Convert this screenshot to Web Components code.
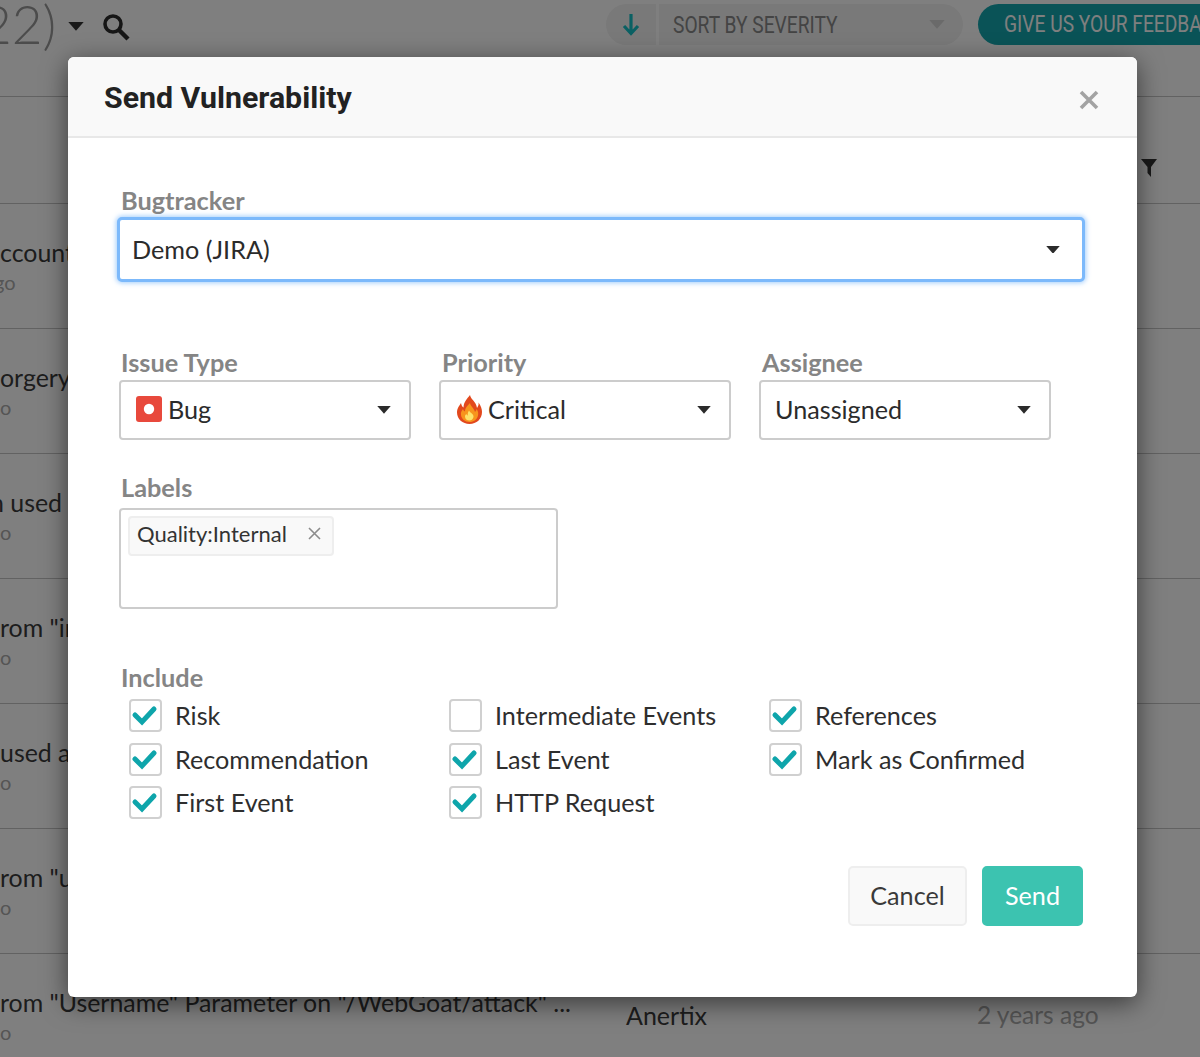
<!DOCTYPE html>
<html>
<head>
<meta charset="utf-8">
<title>Send Vulnerability</title>
<style>
html, body { margin: 0; height: 100%; overflow: hidden; background: #fff; font-family: Lato, "Liberation Sans", sans-serif; }
</style>
</head>
<body>
<vuln-app></vuln-app>

<script>
function caret(color, w) {
    var h = w * 0.55;
    return `<svg width="${w}" height="${h}" viewBox="0 0 14 8"><path d="M0 0H14L7 8Z" fill="${color}"/></svg>`;
}

// one row of the table behind the modal
class VulnRow extends HTMLElement {
    connectedCallback() {
        this.attachShadow({mode: "open"}).innerHTML = `
        <style>
        :host { display: block; height: 124px; border-bottom: 1px solid #c4c4c4; box-sizing: content-box; overflow: hidden; }
        #main { padding-top: 33px; margin-left: var(--shift, 0); white-space: nowrap; font-size: 24.9px; line-height: 30px; color: #3a3a3a; }
        #sub { font-size: 20px; line-height: 30px; color: #aaa; margin-left: var(--sub-shift, 0); }
        </style>
        <div id="main">${this.getAttribute("text")}</div>
        <div id="sub">${this.getAttribute("sub")}</div>`;
    }
}
customElements.define("vuln-row", VulnRow);

class FormField extends HTMLElement {
    connectedCallback() {
        this.attachShadow({mode: "open"}).innerHTML = `
        <style>
        :host { display: block; }
        #lab { font: 700 25.3px/30px Lato, sans-serif; color: #858585; padding-left: var(--lab-pad, 2px); margin-bottom: var(--lab-gap, 3px); }
        </style>
        <div id="lab">${this.getAttribute("label")}</div>
        <slot></slot>`;
    }
}
customElements.define("form-field", FormField);

class SelectBox extends HTMLElement {
    connectedCallback() {
        this.attachShadow({mode: "open"}).innerHTML = `
        <style>
        :host { display: flex; align-items: center; box-sizing: border-box; height: 60px; padding: 0 18px 0 14px; background: #fff;
                border: 2px solid #ccc; border-radius: 4px; font: 400 25.2px/32px Lato, sans-serif; color: #2b2b2b; }
        :host([focused]) { height: 65px; margin: -1px -2px -3px -1px; padding: 0 22px 0 12px; border: 3px solid #7cb9fb; box-shadow: 0 0 5px 1px rgba(124,185,251,.7); border-radius: 5px; }
        #val { flex: 1; display: flex; align-items: center; gap: 6px; padding-bottom: 2px; }
        svg { display: block; }
        </style>
        <div id="val"><slot name="icon"></slot><slot></slot></div>
        ${caret("#2b2b2b", 14)}`;
    }
}
customElements.define("select-box", SelectBox);

class TagChip extends HTMLElement {
    connectedCallback() {
        this.attachShadow({mode: "open"}).innerHTML = `
        <style>
        :host { display: inline-flex; align-items: center; box-sizing: border-box; height: 40px; padding: 0 11px 5px 7px; background: #f9f9f9;
                border: 2px solid #eee; border-radius: 4px; font: 400 22px/28px Lato, sans-serif; color: #333; }
        svg { margin-left: 21px; display: block; }
        </style>
        <slot></slot>
        <svg width="13" height="13" viewBox="0 0 13 13"><path d="M1 1L12 12M12 1L1 12" stroke="#8c8c8c" stroke-width="1.6" fill="none"/></svg>`;
    }
}
customElements.define("tag-chip", TagChip);

class CheckItem extends HTMLElement {
    connectedCallback() {
        var mark = this.hasAttribute("checked")
            ? `<svg width="29" height="29" viewBox="0 0 29 29"><path d="M4 14L11 21L23 8" fill="none" stroke="#0ea5ab" stroke-width="5" stroke-linecap="round"/></svg>` : "";
        this.attachShadow({mode: "open"}).innerHTML = `
        <style>
        :host { display: flex; align-items: center; height: 33px; font: 400 25.2px/33px Lato, sans-serif; color: #2e2e2e; white-space: nowrap; }
        #box { box-sizing: border-box; width: 33px; height: 33px; margin-right: 13px; border: 2px solid #d0d0d0; border-radius: 4px; background: #fff; flex: none; }
        svg { display: block; }
        </style>
        <div id="box">${mark}</div>
        <slot></slot>`;
    }
}
customElements.define("check-item", CheckItem);

class UiButton extends HTMLElement {
    connectedCallback() {
        this.attachShadow({mode: "open"}).innerHTML = `
        <style>
        :host { display: flex; align-items: center; justify-content: center; box-sizing: border-box; height: 60px; padding-bottom: 2px; border-radius: 5px; font: 400 25.2px/32px Lato, sans-serif;
                background: #f9f9f9; border: 2px solid #eee; color: #3a3a3a; width: 119px; }
        :host([primary]) { background: #3cc3b0; border-color: #3cc3b0; color: #fff; width: 101px; }
        </style>
        <slot></slot>`;
    }
}
customElements.define("ui-button", UiButton);

class SendModal extends HTMLElement {
    connectedCallback() {
        this.attachShadow({mode: "open"}).innerHTML = `
        <style>
        :host { display: block; position: absolute; left: 68px; top: 57px; width: 1069px; height: 940px; background: #fff; border-radius: 6px;
                box-shadow: 0 6px 26px rgba(0,0,0,.55); overflow: hidden; color: #222; }
        header { display: flex; align-items: center; justify-content: space-between; box-sizing: border-box; height: 81px; padding: 0 38px 0 36px;
                 background: #f9f9f9; border-bottom: 2px solid #e8e8e8; }
        h1 { margin: 0; font: 700 30.3px/36px Roboto, sans-serif; color: #222; position: relative; top: 1px; }
        header svg { display: block; position: relative; top: 3px; }
        main { padding: 47px 54px 0 50px; }
        .three { display: grid; grid-template-columns: repeat(3, 292px); column-gap: 28px; margin: 68px 0 0 1px; }
        #labels { margin: 32px 0 0 1px; }
        #labelbox { box-sizing: border-box; width: 439px; height: 101px; padding: 6px 7px; border: 2px solid #ccc; border-radius: 4px; }
        #include { margin-top: 53px; }
        #checks { display: grid; grid-template-columns: repeat(3, 320px); row-gap: 10.7px; padding-left: 11px; margin-top: 7px; grid-auto-flow: column; grid-template-rows: repeat(3, 33px); }
        footer { display: flex; justify-content: flex-end; gap: 15px; margin-top: 46.6px; }
        #flame, #bug { display: block; flex: none; }
        </style>
        <header>
          <h1>Send Vulnerability</h1>
          <svg width="20" height="20" viewBox="0 0 20 20"><path d="M2 2L18 18M18 2L2 18" stroke="#a3a3a3" stroke-width="3.6" fill="none"/></svg>
        </header>
        <main>
          <form-field label="Bugtracker" style="--lab-pad:3px;--lab-gap:3px">
            <select-box focused>Demo (JIRA)</select-box>
          </form-field>
          <div class="three">
            <form-field label="Issue Type">
              <select-box><svg slot="icon" id="bug" width="26" height="26" viewBox="0 0 26 26" style="margin-left:1px"><rect width="26" height="26" rx="3" fill="#e8493c"/><circle cx="13" cy="13" r="5.2" fill="#fff"/></svg>Bug</select-box>
            </form-field>
            <form-field label="Priority" style="--lab-pad:3px">
              <select-box><svg slot="icon" id="flame" width="25" height="29" viewBox="0 0 25 29" style="margin-left:2px"><path d="M13 0C14 5 19 6 20 13C21 11 22 10 21.500 7.500C24 11 25 14 25 17C25 24 19.500 29 12.500 29C5.500 29 0 24 0 17.500C0 13 2.500 10.500 4 8C4.500 10.500 5 11.500 6.500 12.500C6.500 7 10 4 13 0Z" fill="#e2481d"/><path d="M13 8C13.500 11.500 17 13 18 17C19 16 19.500 15 19.500 14C21 16 21.500 18 21 20.500C20 24.500 17 27 12.500 27C8 27 4.500 24 4 20C3.700 17.500 4.500 16 6 14C6.500 15.500 7 16 8 16.500C8 13 10.500 11 13 8Z" fill="#f7941d"/><path d="M12 15.500C13 18 17 19 16.500 22C16 24.500 14 25.500 12.500 25.500C10 25.500 8 24 8 21.500C8 20.500 8.500 19.500 9.500 19C9.800 20 10 20.300 10.800 20.600C10.500 18.500 11 17 12 15.500Z" fill="#fde26a"/></svg>Critical</select-box>
            </form-field>
            <form-field label="Assignee" style="--lab-pad:3px">
              <select-box>Unassigned</select-box>
            </form-field>
          </div>
          <form-field id="labels" label="Labels" style="--lab-gap:6px">
            <div id="labelbox"><tag-chip>Quality:Internal</tag-chip></div>
          </form-field>
          <form-field id="include" label="Include" style="--lab-gap:0;--lab-pad:3px">
            <div id="checks">
              <check-item checked>Risk</check-item>
              <check-item checked>Recommendation</check-item>
              <check-item checked>First Event</check-item>
              <check-item>Intermediate Events</check-item>
              <check-item checked>Last Event</check-item>
              <check-item checked>HTTP Request</check-item>
              <check-item checked>References</check-item>
              <check-item checked>Mark as Confirmed</check-item>
            </div>
          </form-field>
          <footer>
            <ui-button>Cancel</ui-button>
            <ui-button primary>Send</ui-button>
          </footer>
        </main>`;
    }
}
customElements.define("send-modal", SendModal);

class VulnApp extends HTMLElement {
    connectedCallback() {
        this.attachShadow({mode: "open"}).innerHTML = `
        <style>
        :host { display: block; position: relative; width: 1200px; height: 1057px; overflow: hidden; background: #fff; font-family: Lato, sans-serif; }
        #top { display: flex; align-items: flex-start; height: 97px; box-sizing: border-box; border-bottom: 1px solid #c4c4c4; }
        #count { font: 300 53px/48px Lato, sans-serif; color: #999; margin-left: -19px; width: 77px; flex: none; }
        #drop { margin: 22px 0 0 10px; flex: none; }
        #search { margin: 13px 0 0 18px; display: block; flex: none; }
        #sort { display: flex; height: 41px; width: 357px; margin: 4px 0 0 476px; flex: none; border-radius: 21px; overflow: hidden; gap: 3px; }
        #dir { width: 50px; background: #f2f2f2; display: flex; align-items: center; justify-content: center; }
        #sel { flex: 1; background: #f2f2f2; display: flex; align-items: center; justify-content: space-between; padding: 0 18px 0 14px; }
        #sel span, #fb span { display: inline-block; font: 400 24px/30px Roboto, sans-serif; transform: scaleX(.8); transform-origin: left center; white-space: nowrap; }
        #sel span { color: #888; width: 164px; }
        #fb { margin: 4px 0 0 15px; height: 41px; width: 260px; flex: none; background: #14a6ae; border-radius: 21px 0 0 21px; padding-left: 26px; box-sizing: border-box; display: flex; align-items: center; }
        #fb span { color: #fff; position: relative; top: -1px; }
        #head { display: flex; justify-content: flex-end; height: 107px; box-sizing: border-box; border-bottom: 1px solid #c4c4c4; padding: 62px 41px 0 0; }
        #last { position: relative; }
        #who { position: absolute; left: 626px; top: 46px; font-size: 25px; line-height: 30px; color: #3a3a3a; }
        #when { position: absolute; left: 977px; top: 46px; font-size: 24.5px; line-height: 30px; color: #aaa; }
        #dim { position: absolute; inset: 0; background: rgba(0,0,0,.5); }
        svg { display: block; }
        </style>
        <div id="top">
          <div id="count">22)</div>
          <div id="drop">${caret("#333", 16)}</div>
          <svg id="search" width="28" height="28" viewBox="0 0 28 28"><circle cx="11" cy="11" r="8" fill="none" stroke="#2c2c2c" stroke-width="3.6"/><path d="M17 17L26 26" stroke="#2c2c2c" stroke-width="4.4"/></svg>
          <div id="sort">
            <div id="dir"><svg width="18" height="23" viewBox="0 0 18 23"><path d="M9 1V20M2 13L9 20.500L16 13" fill="none" stroke="#14c0c6" stroke-width="3.2"/></svg></div>
            <div id="sel"><span>SORT BY SEVERITY</span>${caret("#d4d4d4", 16)}</div>
          </div>
          <div id="fb"><span>GIVE US YOUR FEEDBACK</span></div>
        </div>
        <div id="head"><svg width="18" height="18" viewBox="0 0 18 18"><path d="M0 0H16L10 8V18L6.500 14V8Z" fill="#333"/></svg></div>
        <vuln-row text="ccount" sub="go" style="--sub-shift:-6px"></vuln-row>
        <vuln-row text="orgery" sub="o"></vuln-row>
        <vuln-row text="n used a" sub="o" style="--shift:-10px"></vuln-row>
        <vuln-row text='rom "in' sub="o"></vuln-row>
        <vuln-row text="used a" sub="o"></vuln-row>
        <vuln-row text='rom "u' sub="o"></vuln-row>
        <div id="last">
          <vuln-row text='rom "Username" Parameter on "/WebGoat/attack" ...' sub="o"></vuln-row>
          <div id="who">Anertix</div>
          <div id="when">2 years ago</div>
        </div>
        <div id="dim"></div>
        <send-modal></send-modal>`;
    }
}
customElements.define("vuln-app", VulnApp);
</script>
</body>
</html>
